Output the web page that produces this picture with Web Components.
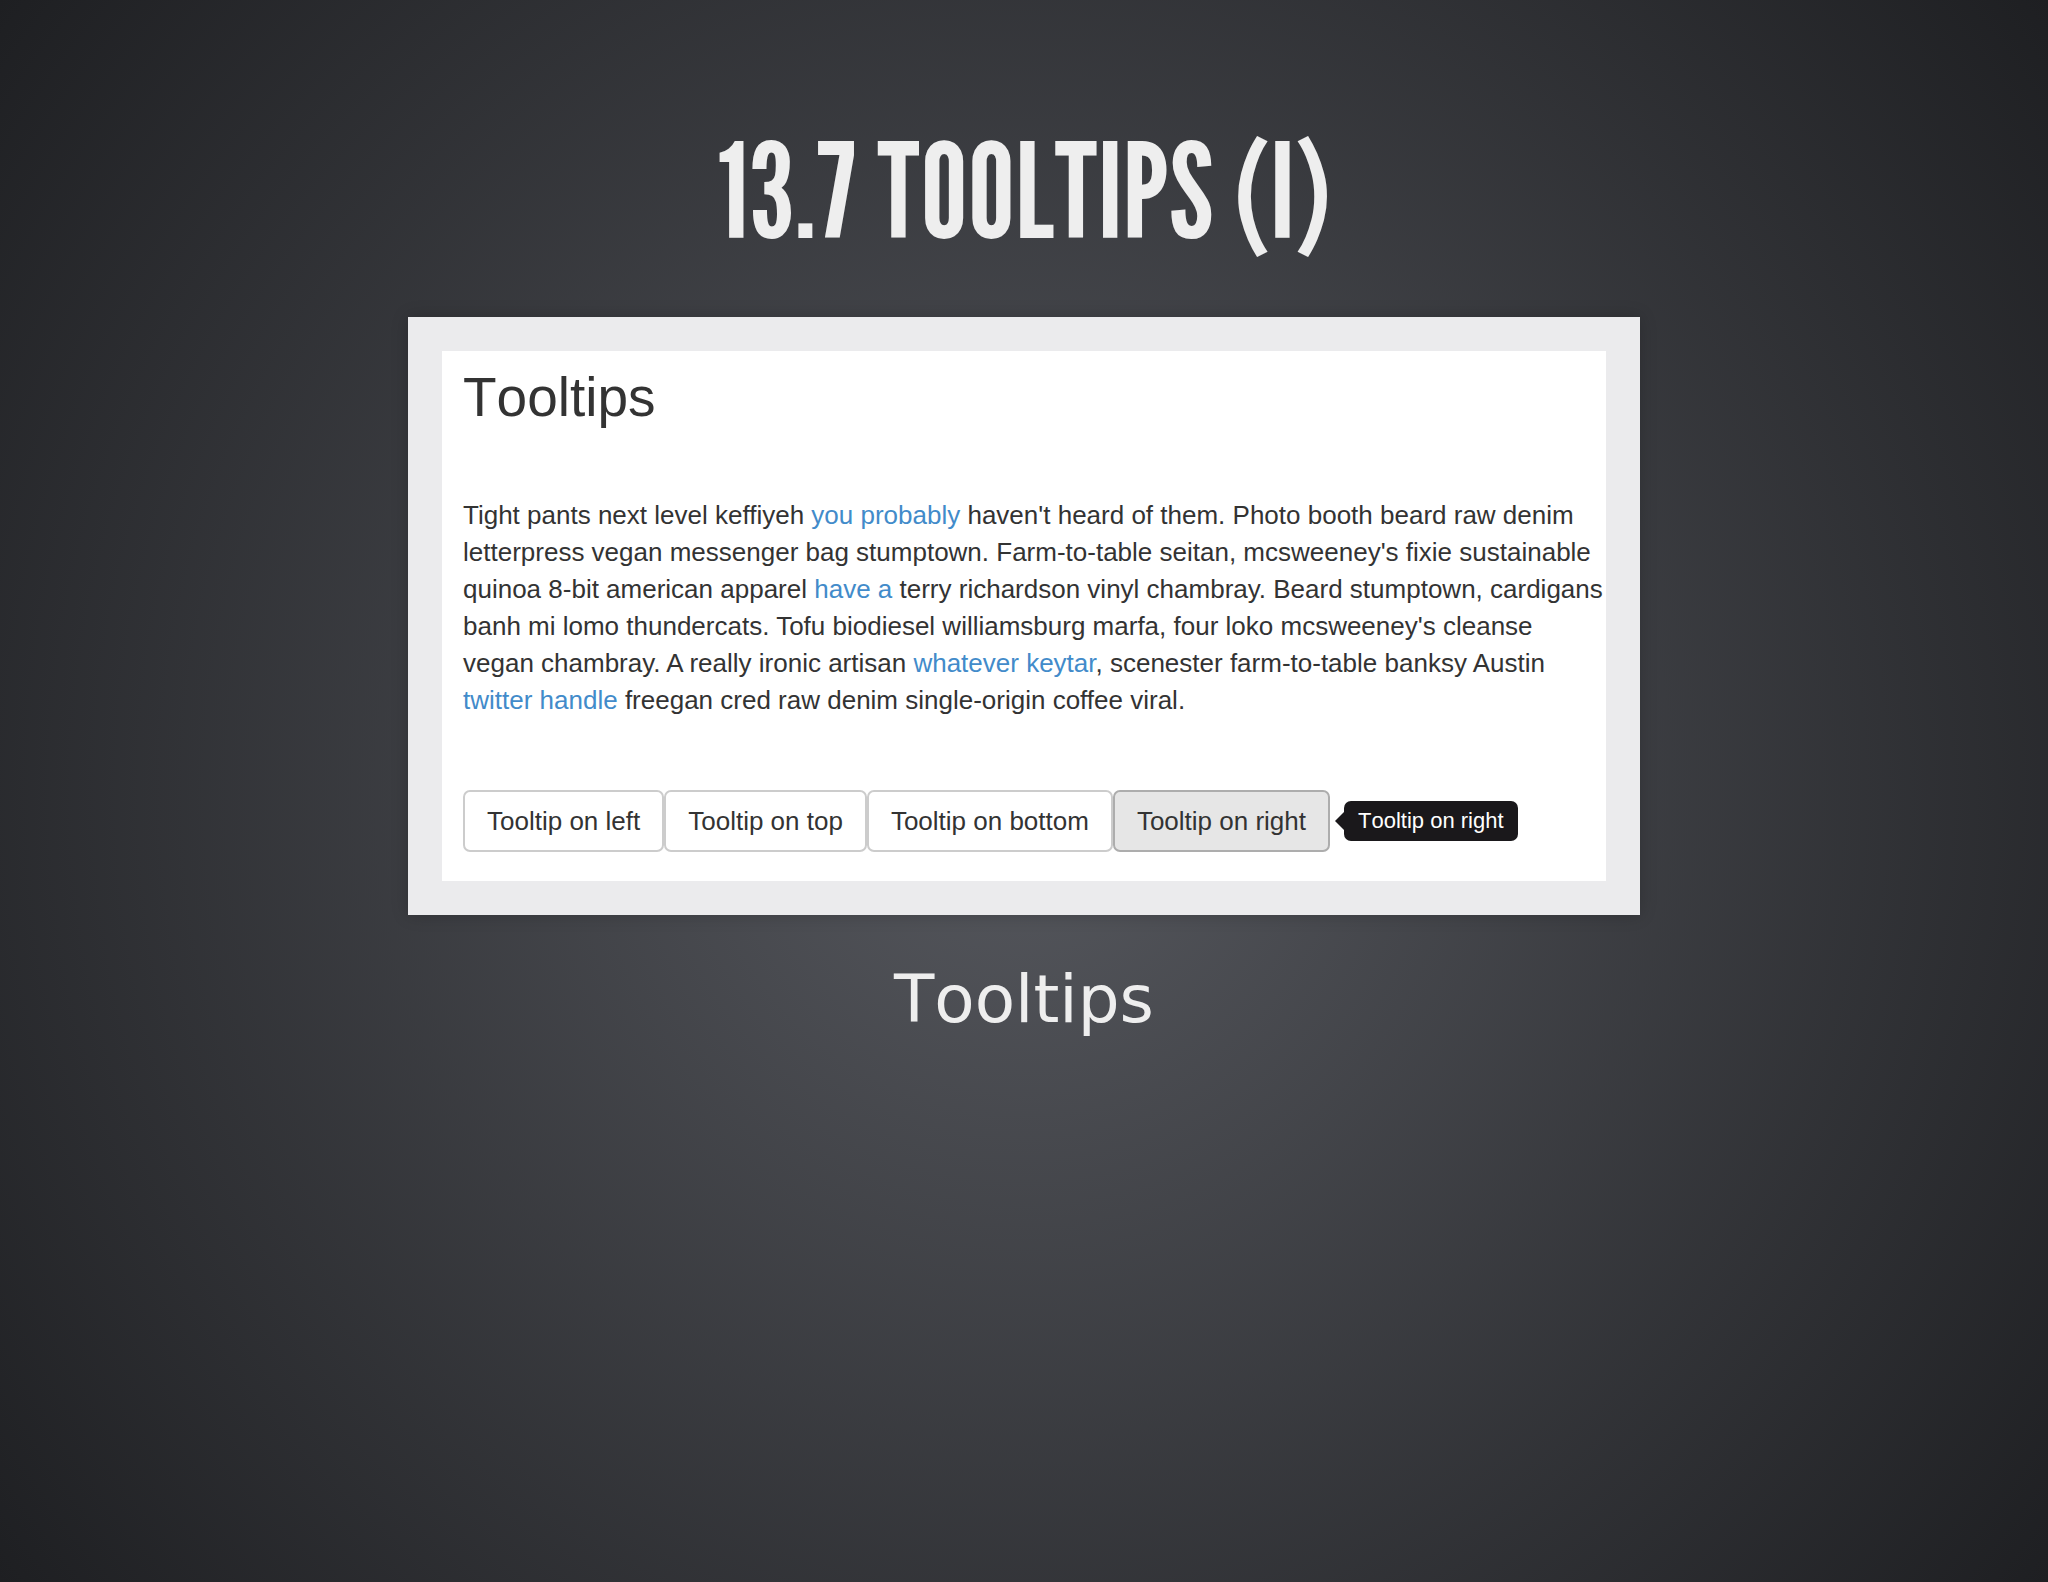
<!DOCTYPE html>
<html lang="en">
<head>
<meta charset="utf-8">
<title>13.7 Tooltips (I)</title>
<style>
html, body { margin: 0; min-height: 100%; }
body { background: #1c1e20; }
</style>
</head>
<body>
<slide-page>
  <span slot="title">13.7 TOOLTIPS (I)</span>
  <framed-demo>
    <span slot="heading">Tooltips</span>
    <demo-text></demo-text>
    <tip-button slot="actions">Tooltip on left</tip-button>
    <tip-button slot="actions">Tooltip on top</tip-button>
    <tip-button slot="actions">Tooltip on bottom</tip-button>
    <tip-button slot="actions" active tip="Tooltip on right">Tooltip on right</tip-button>
  </framed-demo>
  <span slot="caption">Tooltips</span>
</slide-page>
<script>
function define(name, html) {
  const template = document.createElement('template');
  template.innerHTML = html;
  customElements.define(name, class extends HTMLElement {
    constructor() {
      super();
      this.attachShadow({ mode: 'open' }).append(template.content.cloneNode(true));
    }
  });
}

define('slide-page', `
<style>
:host {
  display: flex; flex-direction: column; align-items: center;
  box-sizing: border-box; min-height: 100vh; padding: 120px 40px 0;
  color: #eee; font-kerning: none;
  background: radial-gradient(circle farthest-corner at center, #56585e 0%, #1e1f22 100%);
}
h1 {
  margin: 0 0 57px; line-height: 140px; font-size: 132px; font-weight: 400; text-align: center;
  font-family: "League Gothic", "Liberation Sans Narrow", "Roboto Condensed", "Liberation Sans", sans-serif;
}
main { width: 100%; max-width: 1232px; }
p { margin: 45px 0 0; font: 66px/80px "DejaVu Sans", sans-serif; font-kerning: none; text-align: center; }
</style>
<h1><slot name="title"></slot></h1>
<main><slot></slot><p><slot name="caption"></slot></p></main>`);

define('framed-demo', `
<style>
:host {
  display: block; border: 34px solid #ebebed; background: #fff; color: #333;
  font-family: "Liberation Sans", Arial, sans-serif;
  box-shadow: 0 0 16px rgba(0, 0, 0, 0.2);
}
section { padding: 16px 0 29px 21px; }
h2 { margin: 0 0 70px; font-size: 55px; line-height: 60px; font-weight: 400; }
.actions { display: flex; margin-top: 71px; }
</style>
<section>
  <h2><slot name="heading"></slot></h2>
  <slot></slot>
  <div class="actions"><slot name="actions"></slot></div>
</section>`);

define('demo-text', `
<style>
:host { display: block; font-kerning: auto; }
p { margin: 0; font-size: 26px; line-height: 37px; }
a { color: #428bca; text-decoration: none; }
</style>
<p>Tight pants next level keffiyeh <a href="#">you probably</a> haven't heard of them. Photo booth beard raw denim<br>
letterpress vegan messenger bag stumptown. Farm-to-table seitan, mcsweeney's fixie sustainable<br>
quinoa 8-bit american apparel <a href="#">have a</a> terry richardson vinyl chambray. Beard stumptown, cardigans<br>
banh mi lomo thundercats. Tofu biodiesel williamsburg marfa, four loko mcsweeney's cleanse<br>
vegan chambray. A really ironic artisan <a href="#">whatever keytar</a>, scenester farm-to-table banksy Austin<br>
<a href="#">twitter handle</a> freegan cred raw denim single-origin coffee viral.</p>`);

customElements.define('tip-button', class extends HTMLElement {
  constructor() {
    super();
    this.attachShadow({ mode: 'open' }).innerHTML = `
<style>
:host { display: block; position: relative; }
button {
  margin: 0; padding: 11px 22px; border: 2px solid #ccc; border-radius: 7px;
  background: #fff; color: #333; font: 26px/36px "Liberation Sans", Arial, sans-serif; white-space: nowrap;
}
:host([active]) button { background: #e6e6e6; border-color: #adadad; }
.tip {
  position: absolute; left: 100%; top: 50%; transform: translateY(-50%);
  margin-left: 14px; padding: 0 14px; border-radius: 7px;
  background: #1a181b; color: #fff; font-size: 22px; line-height: 40px; white-space: nowrap;
}
.tip::before {
  content: ""; position: absolute; right: 100%; top: 50%; margin-top: -9px;
  border: 9px solid transparent; border-left-width: 0; border-right-color: #1a181b;
}
</style>
<button type="button"><slot></slot></button>`;
  }
  connectedCallback() {
    const text = this.getAttribute('tip');
    if (!text || this.shadowRoot.querySelector('.tip')) return;
    const tip = document.createElement('div');
    tip.className = 'tip';
    tip.id = 'tip';
    tip.setAttribute('role', 'tooltip');
    tip.textContent = text;
    this.shadowRoot.append(tip);
    this.shadowRoot.querySelector('button').setAttribute('aria-describedby', 'tip');
  }
});
</script>
</body>
</html>
